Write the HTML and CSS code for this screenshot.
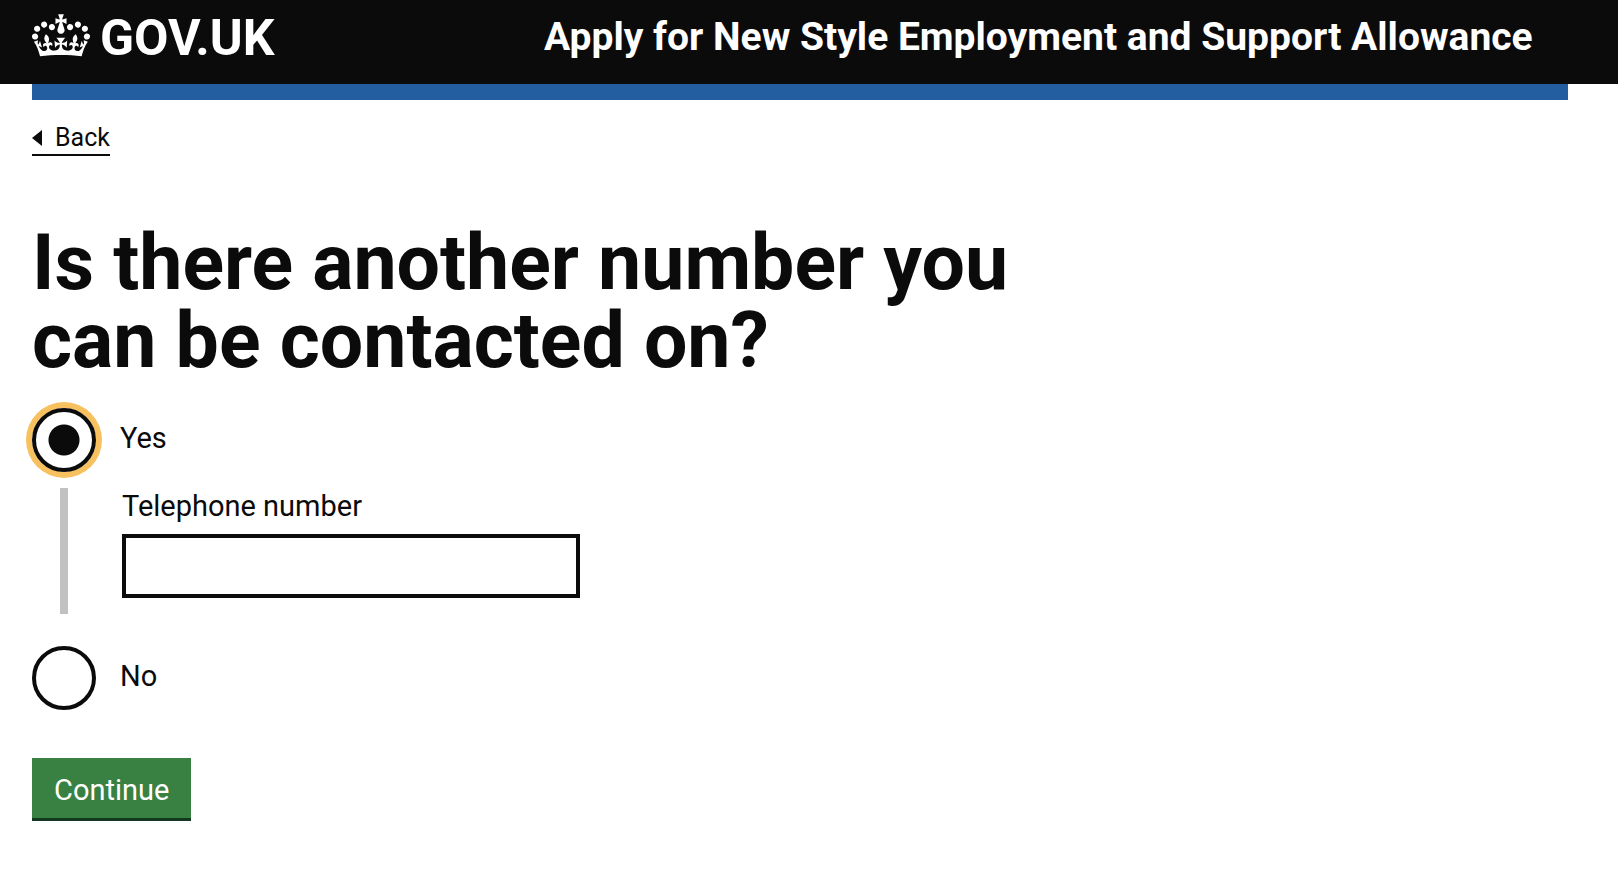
FILE: index.html
```html
<!DOCTYPE html>
<html lang="en">
<head>
<meta charset="utf-8">
<meta name="viewport" content="width=device-width, initial-scale=1">
<title>Is there another number you can be contacted on?</title>
<link rel="stylesheet" href="styles.css">
</head>
<body>
<header class="header">
  <div class="header-inner container">
    <a class="logo" href="#">
      <svg class="crown" viewBox="0 0 132 97" width="58" height="43" aria-hidden="true"><path fill="currentColor" fill-rule="evenodd" d="M25 30.2c3.5 1.5 7.7-.2 9.1-3.7 1.5-3.6-.2-7.8-3.9-9.2-3.6-1.4-7.6.3-9.1 3.9-1.4 3.5.3 7.5 3.9 9zM9 39.5c3.6 1.5 7.8-.2 9.2-3.7 1.5-3.6-.2-7.8-3.9-9.1-3.6-1.5-7.6.2-9.1 3.8-1.4 3.5.3 7.5 3.8 9zM4.4 57.2c3.5 1.5 7.7-.2 9.1-3.8 1.5-3.6-.2-7.7-3.9-9.1-3.5-1.5-7.6.3-9.1 3.8-1.4 3.5.3 7.6 3.9 9.1zm38.3-21.4c3.5 1.5 7.7-.2 9.1-3.8 1.5-3.6-.2-7.7-3.9-9.1-3.6-1.5-7.6.3-9.1 3.8-1.3 3.6.4 7.7 3.9 9.1zm64.4-5.6c-3.6 1.5-7.8-.2-9.1-3.7-1.5-3.6.2-7.8 3.8-9.2 3.6-1.4 7.7.3 9.2 3.9 1.3 3.5-.4 7.5-3.9 9zm15.9 9.3c-3.6 1.5-7.7-.2-9.1-3.7-1.5-3.6.2-7.8 3.7-9.1 3.6-1.5 7.7.2 9.2 3.8 1.5 3.5-.3 7.5-3.8 9zm4.7 17.7c-3.6 1.5-7.8-.2-9.2-3.8-1.5-3.6.2-7.7 3.9-9.1 3.6-1.5 7.7.3 9.2 3.8 1.3 3.5-.4 7.6-3.9 9.1zM89.3 35.8c-3.6 1.5-7.8-.2-9.2-3.8-1.4-3.6.2-7.7 3.9-9.1 3.6-1.5 7.7.3 9.2 3.8 1.4 3.6-.3 7.7-3.9 9.1zM69.7 17.7l8.9 4.7V9.3l-8.9 2.8c-.2-.3-.5-.6-.9-.9L72.4 0H59.6l3.5 11.2c-.3.3-.6.5-.9.9l-8.8-2.8v13.1l8.8-4.7c.3.3.6.7.9.9l-5 15.4v.1c-.2.8-.4 1.6-.4 2.4 0 4.1 3.1 7.5 7 8.1h.2c.3 0 .7.1 1 .1.4 0 .7 0 1-.1h.2c4-.6 7.1-4.1 7.1-8.1 0-.8-.1-1.7-.4-2.4V34l-5.1-15.4c.4-.2.7-.6 1-.9zM66 92.8c16.9 0 32.8 1.1 47.1 3.2 4-16.9 8.9-26.7 14-33.5l-9.6-3.4c1 4.9 1.1 7.2 0 10.2-1.5-1.4-3-4.3-4.2-8.7L108.6 76c2.8-2 5-3.2 7.5-3.3-4.4 9.4-10 11.9-13.6 11.2-4.3-.8-6.3-4.6-5.6-7.9 1-4.7 5.7-5.9 8-.5 4.3-8.7-3-11.4-7.6-8.8 7.1-7.2 7.9-13.5 2.1-21.1-8 6.1-8.1 12.3-4.5 20.8-4.7-5.4-12.1-2.5-9.5 6.2 3.4-5.2 7.9-2 7.2 3.1-.6 4.3-6.4 7.8-13.5 7.2-10.3-.9-10.9-8-11.2-13.8 2.5-.5 7.1 1.8 11 7.3L80.2 60c-4.1 4.4-8 5.3-12.3 5.4 1.4-4.4 8-11.6 8-11.6H55.5s6.4 7.2 7.9 11.6c-4.2-.1-8-1-12.3-5.4l1.4 16.4c3.9-5.5 8.5-7.7 10.9-7.3-.3 5.8-.9 12.8-11.1 13.8-7.2.6-12.9-2.9-13.5-7.2-.7-5 3.8-8.3 7.1-3.1 2.7-8.7-4.6-11.6-9.4-6.2 3.7-8.5 3.6-14.7-4.6-20.8-5.8 7.6-5 13.9 2.2 21.1-4.7-2.6-11.9.1-7.7 8.8 2.3-5.5 7.1-4.2 8.1.5.7 3.3-1.3 7.1-5.7 7.9-3.5.7-9-1.8-13.5-11.2 2.5.1 4.7 1.3 7.5 3.3l-4.7-15.4c-1.2 4.4-2.7 7.2-4.3 8.7-1.1-3-.9-5.3 0-10.2l-9.5 3.4c5 6.9 9.9 16.7 14 33.5 14.8-2.1 30.8-3.2 47.7-3.2z"/></svg>
      <span class="logo-text">GOV.UK</span>
    </a>
    <a class="service" href="#">Apply for New Style Employment and Support Allowance</a>
  </div>
</header>
<div class="container">
  <div class="bar"></div>
  <a class="back" href="#"><svg width="10" height="16" viewBox="0 0 10 16" aria-hidden="true"><path fill="currentColor" d="M0 8 10 0v16z"/></svg>Back</a>
  <main class="main">
    <form>
      <fieldset class="fieldset">
        <legend class="legend"><h1 class="heading">Is there another number you can be contacted on?</h1></legend>
        <div class="option">
          <input class="radio" type="radio" id="yes" name="other" checked autofocus>
          <label for="yes">Yes</label>
        </div>
        <div class="conditional">
          <label for="tel">Telephone number</label>
          <input class="input" type="tel" id="tel" name="tel">
        </div>
        <div class="option">
          <input class="radio" type="radio" id="no" name="other">
          <label for="no">No</label>
        </div>
      </fieldset>
      <button class="button" type="submit">Continue</button>
    </form>
  </main>
</div>
</body>
</html>
```
FILE: styles.css
```css
* { box-sizing: border-box; }
body {
  margin: 0;
  background: #fff;
  color: #0b0b0b;
  font: 29px/36px Roboto, sans-serif;
}
.container { padding: 0 50px 0 32px; }
.header { background: #0b0b0b; }
.header-inner {
  display: grid;
  grid-template-columns: 1fr 2fr;
  align-items: start;
  padding-top: 14px;
  padding-bottom: 22px;
}
.header a { color: #fff; text-decoration: none; font-weight: 700; }
.logo { display: flex; gap: 10px; }
.crown { display: block; }
.logo-text { font-size: 50px; line-height: 48px; }
.header .service { font-size: 39px; line-height: 46px; }
.bar { height: 16px; background: #235ea0; }
.back {
  display: inline-flex;
  align-items: center;
  gap: 13px;
  margin-top: 22px;
  border-bottom: 2px solid #0b0b0b;
  color: #0b0b0b;
  font-size: 25px;
  line-height: 32px;
  text-decoration: none;
}
.main { width: 67%; padding-top: 68px; }
.fieldset { margin: 0; padding: 0; border: 0; min-width: 0; }
.legend { padding: 0; }
.heading { margin: 0 0 28px; font-size: 77px; line-height: 78px; }
.option { display: flex; align-items: flex-start; gap: 24px; height: 64px; }
.option label { padding-top: 12px; }
.radio {
  appearance: none;
  flex: none;
  width: 64px;
  height: 64px;
  margin: 0;
  border: 4px solid #0b0b0b;
  border-radius: 50%;
  background: #fff;
  outline: none;
}
.radio:checked {
  background: radial-gradient(circle, #0b0b0b 15px, #fff 16px);
  box-shadow: 0 0 0 6px #f6c15e;
}
.conditional {
  display: flex;
  flex-direction: column;
  margin: 16px 0 32px 28px;
  padding: 0 0 16px 54px;
  border-left: 8px solid #bfc1c3;
}
.input {
  width: 458px;
  max-width: 100%;
  height: 64px;
  margin-top: 10px;
  padding: 8px;
  border: 4px solid #0b0b0b;
  border-radius: 0;
  background: #fff;
  font: inherit;
}
.button {
  margin-top: 48px;
  padding: 14px 22px 10px;
  border: 0;
  border-bottom: 3px solid #14381f;
  border-radius: 0;
  background: #388142;
  color: #fff;
  font: inherit;
}
```
